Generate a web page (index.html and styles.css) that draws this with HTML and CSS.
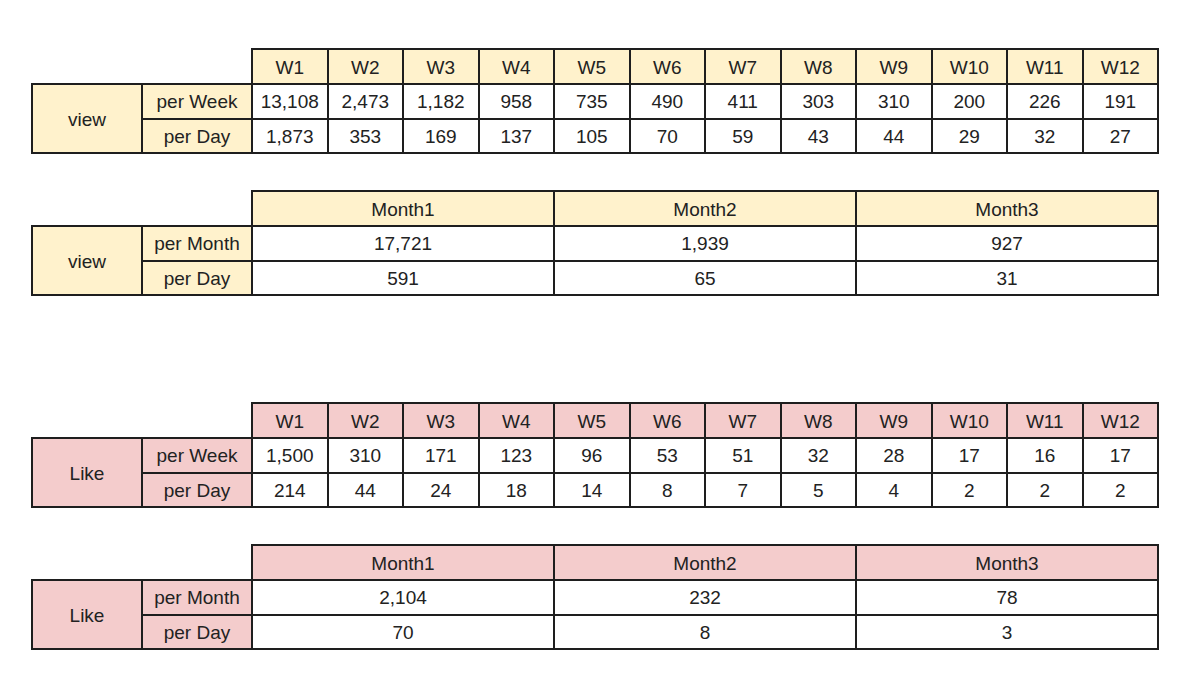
FILE: index.html
```html
<!DOCTYPE html>
<html>
<head>
<meta charset="utf-8">
<link rel="stylesheet" href="styles.css">
</head>
<body>
<div class="page">
  <table class="grid yellow weeks">
    <colgroup><col class="c-label"><col class="c-label"><col span="12" class="c-week"></colgroup>
    <tr class="head"><td class="blank"></td><td class="blank"></td><th>W1</th><th>W2</th><th>W3</th><th>W4</th><th>W5</th><th>W6</th><th>W7</th><th>W8</th><th>W9</th><th>W10</th><th>W11</th><th>W12</th></tr>
    <tr><th rowspan="2" class="metric">view</th><th class="sub">per Week</th><td>13,108</td><td>2,473</td><td>1,182</td><td>958</td><td>735</td><td>490</td><td>411</td><td>303</td><td>310</td><td>200</td><td>226</td><td>191</td></tr>
    <tr><th class="sub">per Day</th><td>1,873</td><td>353</td><td>169</td><td>137</td><td>105</td><td>70</td><td>59</td><td>43</td><td>44</td><td>29</td><td>32</td><td>27</td></tr>
  </table>

  <table class="grid yellow months">
    <colgroup><col class="c-label"><col class="c-label"><col span="3" class="c-month"></colgroup>
    <tr class="head"><td class="blank"></td><td class="blank"></td><th>Month1</th><th>Month2</th><th>Month3</th></tr>
    <tr><th rowspan="2" class="metric">view</th><th class="sub">per Month</th><td>17,721</td><td>1,939</td><td>927</td></tr>
    <tr><th class="sub">per Day</th><td>591</td><td>65</td><td>31</td></tr>
  </table>

  <table class="grid pink weeks section">
    <colgroup><col class="c-label"><col class="c-label"><col span="12" class="c-week"></colgroup>
    <tr class="head"><td class="blank"></td><td class="blank"></td><th>W1</th><th>W2</th><th>W3</th><th>W4</th><th>W5</th><th>W6</th><th>W7</th><th>W8</th><th>W9</th><th>W10</th><th>W11</th><th>W12</th></tr>
    <tr><th rowspan="2" class="metric">Like</th><th class="sub">per Week</th><td>1,500</td><td>310</td><td>171</td><td>123</td><td>96</td><td>53</td><td>51</td><td>32</td><td>28</td><td>17</td><td>16</td><td>17</td></tr>
    <tr><th class="sub">per Day</th><td>214</td><td>44</td><td>24</td><td>18</td><td>14</td><td>8</td><td>7</td><td>5</td><td>4</td><td>2</td><td>2</td><td>2</td></tr>
  </table>

  <table class="grid pink months">
    <colgroup><col class="c-label"><col class="c-label"><col span="3" class="c-month"></colgroup>
    <tr class="head"><td class="blank"></td><td class="blank"></td><th>Month1</th><th>Month2</th><th>Month3</th></tr>
    <tr><th rowspan="2" class="metric">Like</th><th class="sub">per Month</th><td>2,104</td><td>232</td><td>78</td></tr>
    <tr><th class="sub">per Day</th><td>70</td><td>8</td><td>3</td></tr>
  </table>
</div>
</body>
</html>
```

FILE: styles.css
```css
html, body {
  margin: 0;
  padding: 0;
  background: #ffffff;
}

.page {
  padding: 48px 0 0 31px;
  font-family: "Liberation Sans", Arial, sans-serif;
  font-size: 19px;
  color: #222222;
}

.grid {
  border-collapse: collapse;
  table-layout: fixed;
  width: 1126px;
  margin-bottom: 36px;
}

.grid.section {
  margin-top: 106px;
}

.c-label { width: 110px; }
.c-week { width: 75.5px; }
.c-month { width: 302px; }

.grid th,
.grid td {
  border: 2px solid #1e1e1e;
  height: 31.5px;
  padding: 1px 0 0;
  text-align: center;
  vertical-align: middle;
  font-weight: normal;
  line-height: 1;
}

.grid .head th {
  height: 32px;
}

.grid td.blank {
  border: none;
  background: transparent;
}

.grid td {
  background: #ffffff;
}

.yellow th { background: #fff2cc; }
.pink th { background: #f4cccc; }
```
